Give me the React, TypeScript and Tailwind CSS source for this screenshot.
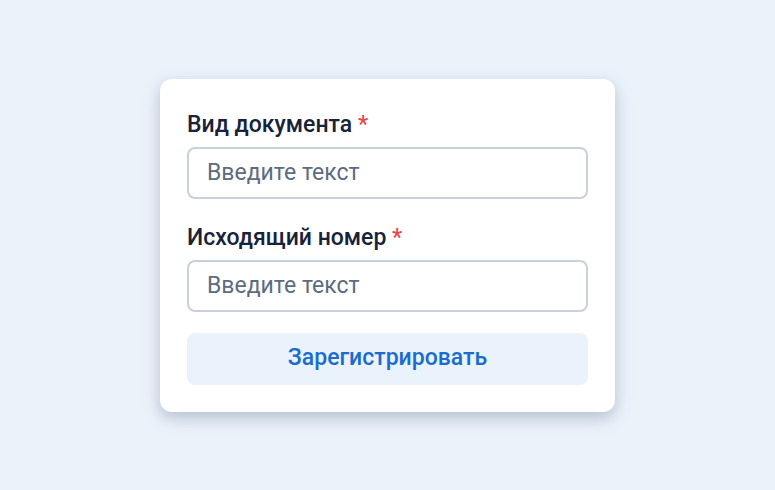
export default function App() {
  return (
    <div className="w-[775px] h-[490px] bg-[#ebf2fa] flex items-center justify-center font-['Roboto',sans-serif]">
      <div className="w-[455px] bg-white rounded-xl shadow-[0_6px_16px_rgba(80,100,130,0.35)] px-[27px] pt-[32px] pb-[27px] flex flex-col">
        <label className="text-[23px] leading-[28px] font-medium text-[#17223b]">
          Вид документа <span className="text-[#e5484d]">*</span>
        </label>
        <input
          className="mt-[8px] h-[52px] rounded-lg border-2 border-[#c8d0dc] px-[18px] text-[23px] text-[#17223b] placeholder:text-[#5c6b80] outline-none"
          placeholder="Введите текст"
        />
        <label className="mt-[25px] text-[23px] leading-[28px] font-medium text-[#17223b]">
          Исходящий номер <span className="text-[#e5484d]">*</span>
        </label>
        <input
          className="mt-[8px] h-[52px] rounded-lg border-2 border-[#c8d0dc] px-[18px] text-[23px] text-[#17223b] placeholder:text-[#5c6b80] outline-none"
          placeholder="Введите текст"
        />
        <button className="mt-[21px] h-[52px] rounded-lg bg-[#eaf2fb] text-[23px] font-medium text-[#1a6ccf]">
          Зарегистрировать
        </button>
      </div>
    </div>
  );
}
